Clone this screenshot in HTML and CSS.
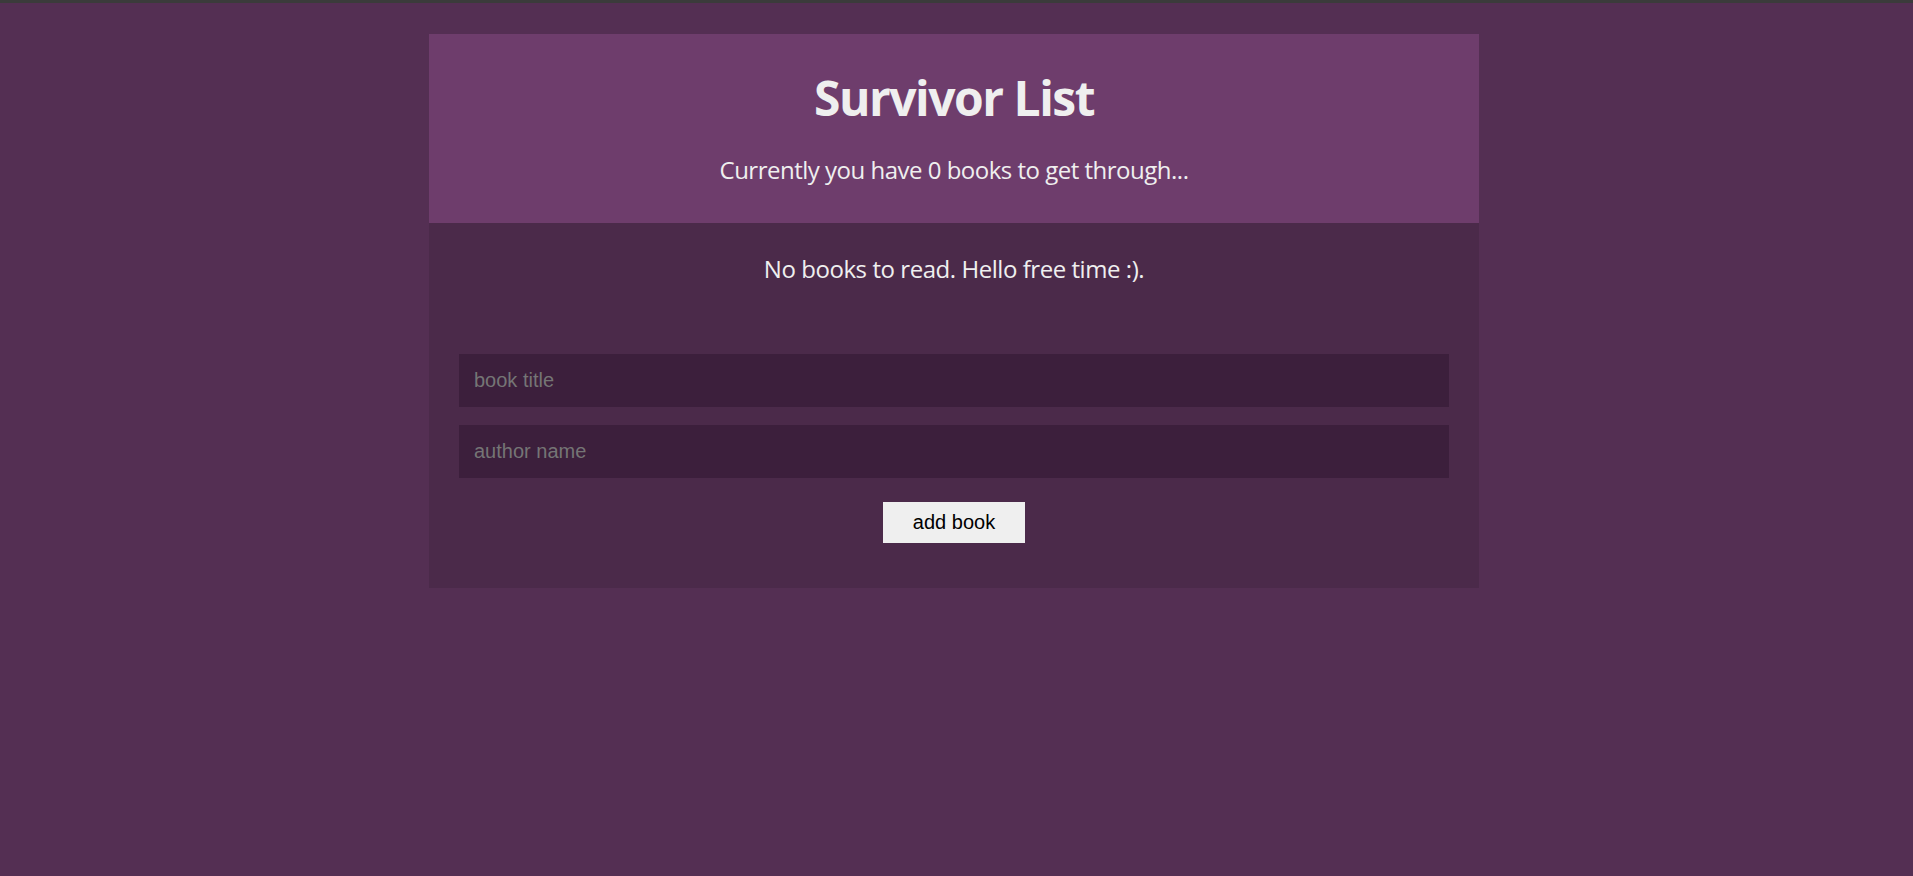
FILE: index.html
```html
<!DOCTYPE html>
<html lang="en">
<head>
<meta charset="utf-8">
<title>Survivor List</title>
<link rel="stylesheet" href="styles.css">
</head>
<body>
<div class="topbar"></div>
<div class="page">
  <main class="app">
    <header class="app-header">
      <h1 class="title">Survivor List</h1>
      <p class="subtitle">Currently you have 0 books to get through...</p>
    </header>
    <section class="app-body">
      <p class="empty">No books to read. Hello free time :).</p>
      <form class="book-form">
        <input class="field" type="text" placeholder="book title">
        <input class="field" type="text" placeholder="author name">
        <button class="add-btn" type="button">add book</button>
      </form>
    </section>
  </main>
</div>
</body>
</html>
```
FILE: styles.css
```css
html, body {
  margin: 0;
  padding: 0;
  background: #542f53;
  height: 100%;
}
body {
  font-family: "Open Sans", "Noto Sans", sans-serif;
  color: #efefef;
}
.topbar {
  height: 3px;
  background: #3b3b3b;
}
.page {
  padding: 31px 5px 0 0;
}
.app {
  width: 1050px;
  margin: 0 auto;
}
.app-header {
  background: #6e3d6c;
  height: 189px;
  box-sizing: border-box;
  padding-top: 35px;
  text-align: center;
}
.title {
  margin: 0;
  font-size: 48px;
  line-height: 58px;
  font-weight: 700;
  letter-spacing: -1.5px;
}
.subtitle {
  margin: 27px 0 0;
  font-size: 24px;
  line-height: 32px;
  letter-spacing: -0.5px;
}
.app-body {
  background: #4b2a4a;
  height: 365px;
  box-sizing: border-box;
  padding: 30px 30px 0;
  text-align: center;
}
.empty {
  margin: 0;
  font-size: 24px;
  line-height: 32px;
  letter-spacing: -0.45px;
}
.book-form {
  margin-top: 69px;
  display: flex;
  flex-direction: column;
  align-items: center;
  gap: 18px;
}
.field {
  width: 100%;
  height: 53px;
  box-sizing: border-box;
  border: none;
  outline: none;
  background: #3c1f3c;
  padding: 0 15px;
  font-family: "Liberation Sans", Arial, sans-serif;
  font-size: 20px;
  color: #efefef;
}
.field::placeholder {
  color: #757575;
}
.add-btn {
  margin-top: 6px;
  width: 142px;
  height: 41px;
  border: none;
  background: #efefef;
  color: #000;
  font-family: "Liberation Sans", Arial, sans-serif;
  font-size: 20px;
  padding: 0;
}
```
